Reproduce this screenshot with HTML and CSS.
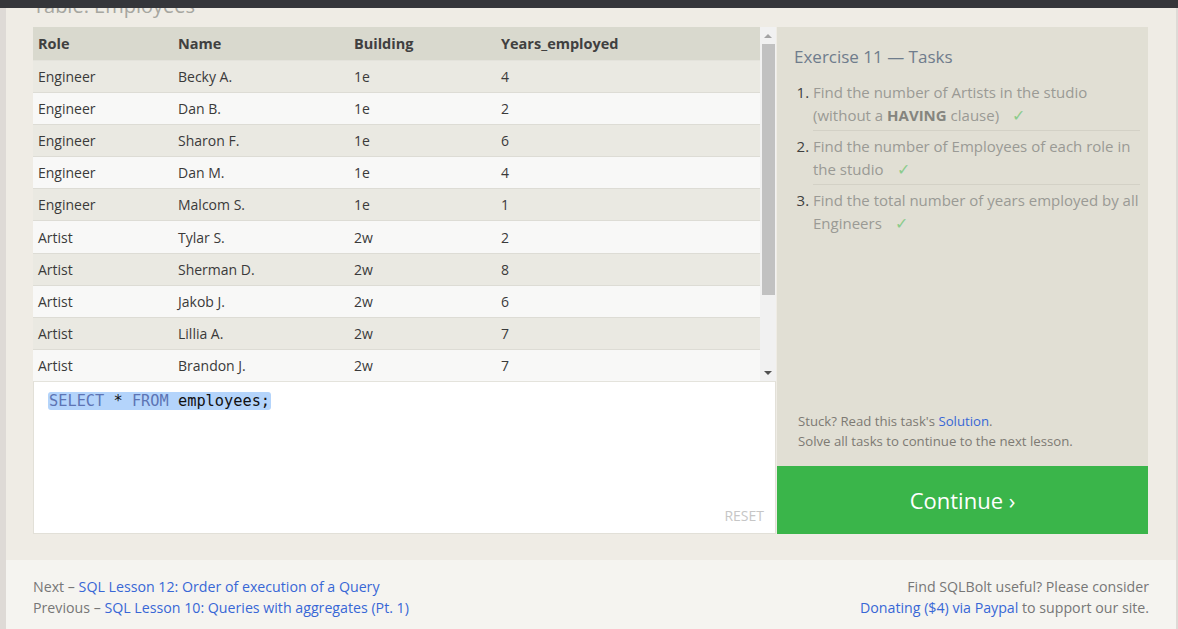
FILE: index.html
```html
<!DOCTYPE html>
<html>
<head>
<meta charset="utf-8">
<link rel="stylesheet" href="styles.css">
</head>
<body>
<div class="topbar"></div>
<div class="page">
  <main class="main">
    <h3 class="table-title">Table: Employees</h3>
    <div class="exercise">
      <div class="left">
        <div class="table-wrap">
          <table class="data">
            <thead>
              <tr><th class="c1">Role</th><th class="c2">Name</th><th class="c3">Building</th><th class="c4">Years_employed</th></tr>
            </thead>
            <tbody>
              <tr><td>Engineer</td><td>Becky A.</td><td>1e</td><td>4</td></tr>
              <tr><td>Engineer</td><td>Dan B.</td><td>1e</td><td>2</td></tr>
              <tr><td>Engineer</td><td>Sharon F.</td><td>1e</td><td>6</td></tr>
              <tr><td>Engineer</td><td>Dan M.</td><td>1e</td><td>4</td></tr>
              <tr><td>Engineer</td><td>Malcom S.</td><td>1e</td><td>1</td></tr>
              <tr><td>Artist</td><td>Tylar S.</td><td>2w</td><td>2</td></tr>
              <tr><td>Artist</td><td>Sherman D.</td><td>2w</td><td>8</td></tr>
              <tr><td>Artist</td><td>Jakob J.</td><td>2w</td><td>6</td></tr>
              <tr><td>Artist</td><td>Lillia A.</td><td>2w</td><td>7</td></tr>
              <tr><td>Artist</td><td>Brandon J.</td><td>2w</td><td>7</td></tr>
            </tbody>
          </table>
          <div class="scrollbar">
            <div class="arrow up"></div>
            <div class="track"><div class="thumb"></div></div>
            <div class="arrow down"></div>
          </div>
        </div>
        <div class="editor">
          <div class="code"><span class="sel"><span class="kw">SELECT</span> * <span class="kw">FROM</span> employees;</span></div>
          <div class="reset">RESET</div>
        </div>
      </div>
      <div class="right">
        <div class="tasks">
          <h4 class="tasks-title">Exercise 11 — Tasks</h4>
          <ol class="task-list">
            <li><span class="t">Find the number of Artists in the studio (without a <b>HAVING</b> clause)</span><span class="check">✓</span></li>
            <li><span class="t">Find the number of Employees of each role in the studio</span><span class="check">✓</span></li>
            <li><span class="t">Find the total number of years employed by all Engineers</span><span class="check">✓</span></li>
          </ol>
          <div class="help">
            <div>Stuck? Read this task's <a href="#">Solution</a>.</div>
            <div>Solve all tasks to continue to the next lesson.</div>
          </div>
        </div>
        <div class="continue">Continue ›</div>
      </div>
    </div>
  </main>
  <footer class="footer">
    <div class="nav">
      <div>Next – <a href="#">SQL Lesson 12: Order of execution of a Query</a></div>
      <div>Previous – <a href="#">SQL Lesson 10: Queries with aggregates (Pt. 1)</a></div>
    </div>
    <div class="donate">
      <div>Find SQLBolt useful? Please consider</div>
      <div><a href="#">Donating ($4) via Paypal</a> to support our site.</div>
    </div>
  </footer>
</div>
</body>
</html>
```
FILE: styles.css
```css
html, body {
  margin: 0;
  padding: 0;
}
body {
  background: #dedad6;
  font-family: "Open Sans", "Noto Sans", sans-serif;
  color: #333;
  height: 629px;
  overflow: hidden;
}
a {
  color: #3867d6;
  text-decoration: none;
}
.topbar {
  position: fixed;
  top: 0;
  left: 0;
  right: 0;
  height: 8px;
  background: #35363a;
  z-index: 5;
}
.page {
  margin: 0 2px 0 6px;
}
.main {
  background: #efece5;
  padding: 0 28px 26px 27px;
}
.table-title {
  margin: 0;
  margin-top: -6px;
  height: 33px;
  font-size: 20px;
  line-height: 24px;
  font-weight: 400;
  color: #a6a6a0;
}
.exercise {
  display: flex;
  gap: 1px;
  height: 507px;
}
.left {
  width: 743px;
  display: flex;
  flex-direction: column;
}
.table-wrap {
  display: flex;
  height: 354px;
  overflow: hidden;
  background: #f8f8f7;
}
.data {
  width: 727px;
  border-collapse: collapse;
  font-size: 14px;
  table-layout: fixed;
}
.data th {
  background: #d9d9ce;
  color: #404040;
  font-weight: 700;
  text-align: left;
  height: 33px;
  padding: 0 0 0 5px;
  font-size: 14.5px;
}
.data th.c1 { width: 135px; }
.data th.c2 { width: 171px; }
.data th.c3 { width: 142px; }
.data td {
  height: 31px;
  padding: 0 0 0 5px;
  border-top: 1px solid #dddcd5;
  color: #3a3a3a;
}
.data tbody tr:nth-child(odd) td { background: #eae9e2; }
.data tbody tr:nth-child(even) td { background: #f8f8f7; }
.data tbody tr:first-child td { border-top: 1px solid #e4e3dc; }
.scrollbar {
  width: 16px;
  background: #f1f1f1;
  display: flex;
  flex-direction: column;
  align-items: center;
}
.arrow {
  height: 17px;
  width: 16px;
  display: flex;
  align-items: center;
  justify-content: center;
}
.arrow.up::before {
  content: "";
  border-left: 4px solid transparent;
  border-right: 4px solid transparent;
  border-bottom: 4px solid #a3a3a3;
}
.arrow.down::before {
  content: "";
  border-left: 4px solid transparent;
  border-right: 4px solid transparent;
  border-top: 4px solid #505050;
}
.track {
  flex: 1;
  width: 16px;
  display: flex;
  justify-content: center;
}
.thumb {
  width: 13px;
  height: 251px;
  background: #c1c1c1;
}
.editor {
  flex: 1;
  background: #fff;
  border: 1px solid #e2e0d8;
  border-top: 1px solid #e4e3dc;
  display: flex;
  flex-direction: column;
  justify-content: space-between;
  padding: 9px 11px 9px 14px;
}
.code {
  font-family: "DejaVu Sans Mono", "Liberation Mono", monospace;
  font-size: 15.3px;
  line-height: 20px;
  color: #111;
}
.sel {
  background: #b4d4fb;
  border-radius: 3px;
  padding: 0 1px;
}
.kw {
  color: #5d74b4;
}
.reset {
  align-self: flex-end;
  font-size: 14px;
  color: #c6c6c6;
  line-height: 16px;
}
.right {
  width: 371px;
  display: flex;
  flex-direction: column;
}
.tasks {
  flex: 1;
  background: #e1dfd4;
  padding: 18px 8px 15px 17px;
  display: flex;
  flex-direction: column;
}
.tasks-title {
  margin: 0;
  font-size: 17px;
  line-height: 24px;
  font-weight: 400;
  color: #6f7c8c;
}
.task-list {
  margin: 12px 0 0 0;
  padding: 0 0 0 19px;
  font-size: 15px;
  line-height: 23px;
  color: #9a9a95;
  flex: 1;
}
.task-list li {
  color: #3f3f3f;
  padding: 0 0 3px 0;
  margin-bottom: 4px;
  border-bottom: 1px solid #d3d1c6;
}
.task-list li:last-child {
  border-bottom: none;
}
.task-list .t {
  color: #9a9a95;
}
.task-list b {
  color: #85857f;
}
.check {
  color: #8ccc8c;
  margin-left: 13px;
  font-size: 16px;
}
.help {
  font-size: 13.2px;
  line-height: 20px;
  color: #7d7a73;
  padding-left: 4px;
}
.continue {
  height: 68px;
  background: #3ab54a;
  color: #fff;
  font-size: 22px;
  display: flex;
  align-items: center;
  justify-content: center;
}
.footer {
  background: #f5f4f0;
  height: 69px;
  padding: 16px 27px 0 27px;
  box-sizing: border-box;
  display: flex;
  justify-content: space-between;
  font-size: 14.2px;
  line-height: 21px;
  color: #777;
}
.donate {
  text-align: right;
}
```
